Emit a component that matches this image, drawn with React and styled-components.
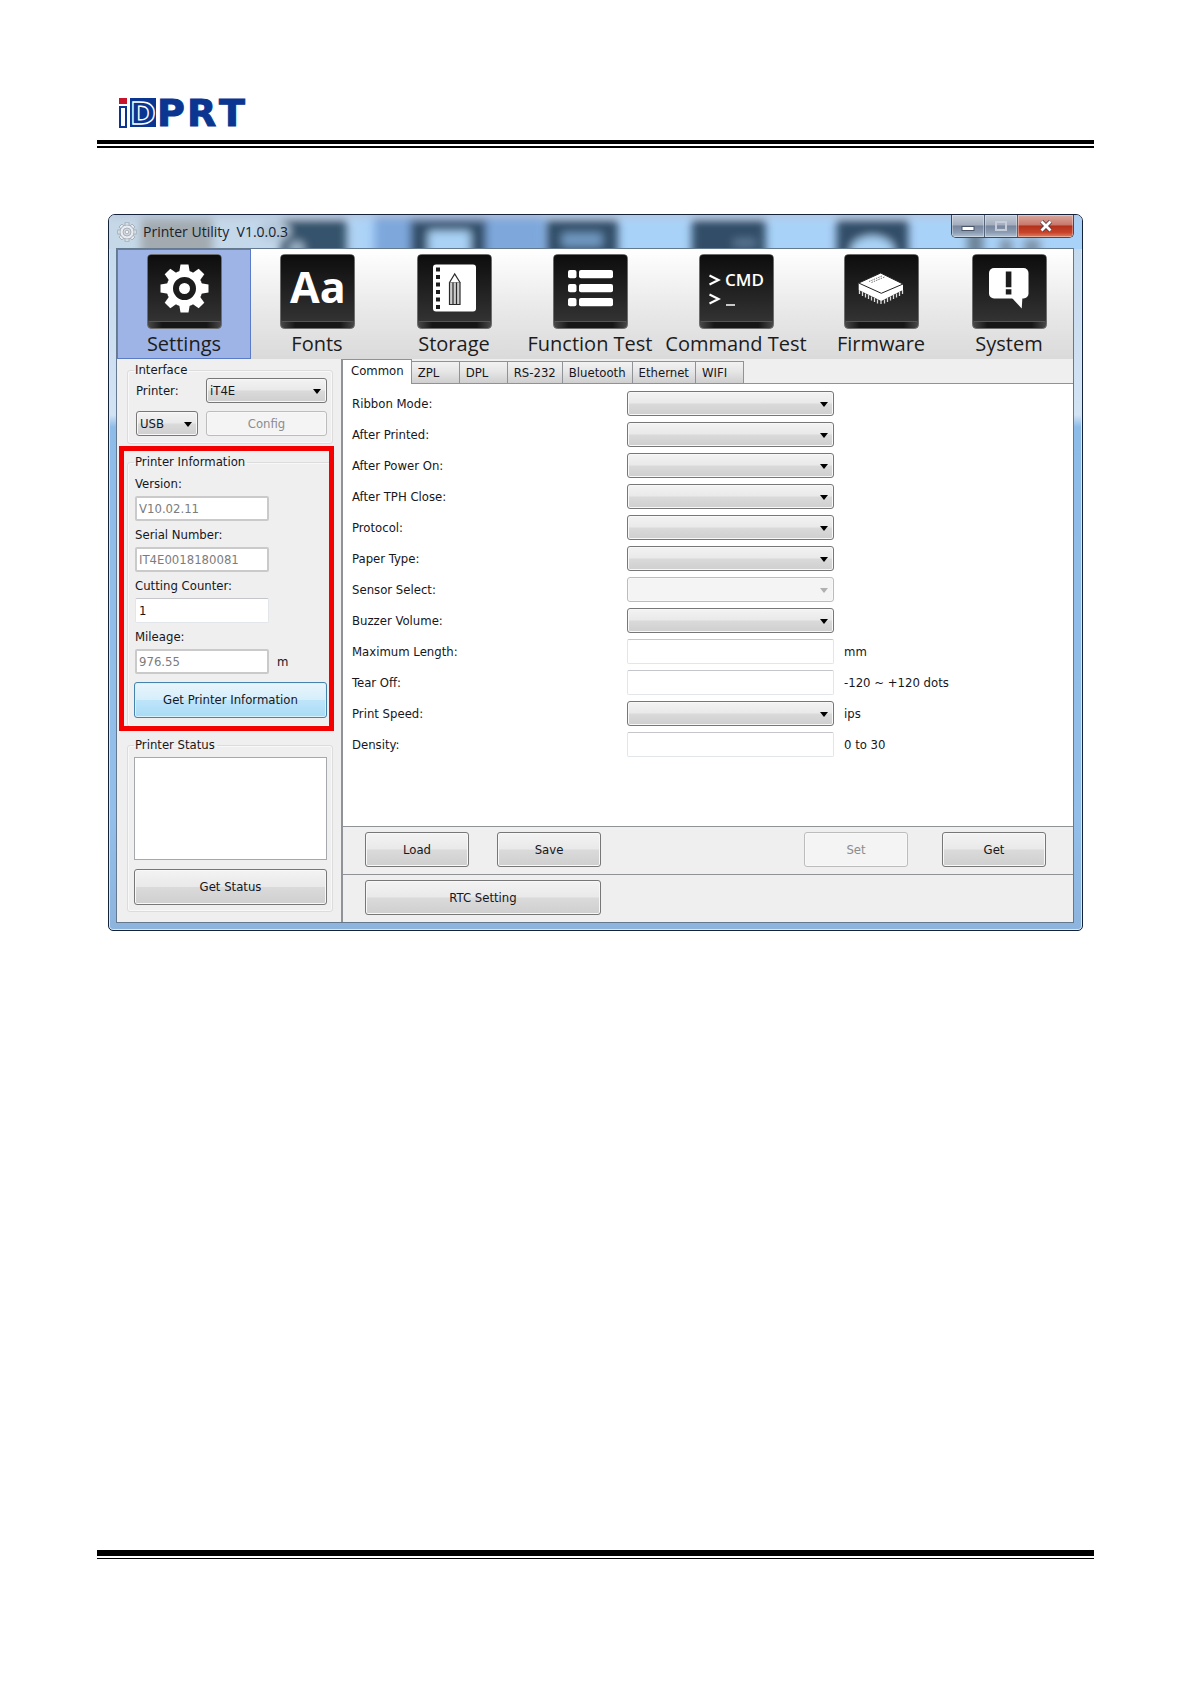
import { useState } from "react";
import styled, { createGlobalStyle, css } from "styled-components";

const GlobalStyle = createGlobalStyle`
  * {
    box-sizing: border-box;
  }

  body {
    margin: 0;
    background: #fff;
    color: #16161c;
    font-family: "DejaVu Sans Condensed", "DejaVu Sans", sans-serif;
    font-stretch: condensed;
    font-size: 13px;
    line-height: 16px;
  }

  button, input, select, textarea {
    font: inherit;
    color: inherit;
    margin: 0;
  }
`;

const Page = styled.div`
  display: flex;
  flex-direction: column;
  min-height: 100vh;
  padding: 88px 97px 125px;
`;

const Header = styled.header`
  padding-left: 20px;
  height: 52px;
  font-stretch: normal;
`;

const DoubleRule = styled.div`
  height: ${(p) => (p.$heavy ? 9 : 8)}px;
  border-top: ${(p) => (p.$heavy ? 6 : 4)}px solid #000;
  border-bottom: ${(p) => (p.$heavy ? 1 : 2)}px solid #000;
`;

const Main = styled.main`
  flex: 1;
  padding: 66px 11px 0;
`;

const Window = styled.section`
  position: relative;
  padding: 0 8px 7px 7px;
  border: 1px solid #14233a;
  border-radius: 7px 7px 5px 5px;
  overflow: hidden;
  background: linear-gradient(
    #c3d8ec 0,
    #d2e3f4 200px,
    #8ebce8 212px,
    #93bfea 600px,
    #8db4dd 100%
  );
  box-shadow: inset 0 0 0 1px #d6e8f8;
`;

const Backdrop = styled.svg`
  position: absolute;
  inset: 0;
  width: 100%;
  height: 34px;
`;

const TitleBar = styled.div`
  position: relative;
  display: flex;
  align-items: center;
  height: 33px;
  gap: 6px;
  padding-left: 1px;
  font-family: "Open Sans", sans-serif;
  font-stretch: normal;
  font-size: 14px;
  white-space: pre;

  h1 {
    flex: 1;
    margin: 0;
    font: inherit;
    color: #1a222c;
  }
`;

const CaptionButtons = styled.div`
  display: flex;
  align-self: flex-start;
  height: 23px;
  border: 1px solid #3d4c60;
  border-top: none;
  border-radius: 0 0 5px 5px;
  overflow: hidden;
`;

const CaptionButton = styled.button`
  display: flex;
  align-items: center;
  justify-content: center;
  width: ${(p) => (p.$close ? 55 : 33)}px;
  padding: 0;
  border: none;
  border-right: ${(p) => (p.$close ? "none" : "1px solid #54647a")};
  background: ${(p) =>
    p.$close
      ? "linear-gradient(#d9a79c 0, #c9776a 45%, #b3301b 50%, #c8452b 80%, #dd8263 100%)"
      : "linear-gradient(#c4ccd8 0, #a3adbd 45%, #77869c 50%, #8d9db3 80%, #b2c2d6 100%)"};
  box-shadow: inset 0 0 0 1px rgba(255, 255, 255, 0.35);
`;

const Client = styled.div`
  position: relative;
  border: 1px solid #64798f;
  background: #efefef;
`;

const Toolbar = styled.nav`
  display: grid;
  grid-template-columns: 134fr 132fr 142fr 130fr 162fr 128fr 128fr;
  height: 110px;
  background: linear-gradient(#fff, #e9e9e9 55%, #dadada);
`;

const Tool = styled.button`
  display: flex;
  flex-direction: column;
  align-items: center;
  gap: 1px;
  padding: 4px 0 0;
  border: 1px solid ${(p) => (p.$active ? "#5b7cc4" : "transparent")};
  background: ${(p) => (p.$active ? "#9fb4e6" : "none")};
  font-family: "Open Sans", sans-serif;
  font-stretch: normal;
  font-size: 20px;
  line-height: 28px;
  white-space: nowrap;
  color: #1c1c1c;

  svg {
    flex: none;
  }
`;

const Body = styled.div`
  display: grid;
  grid-template-columns: 224px 1fr;
`;

const Sidebar = styled.aside`
  display: flex;
  flex-direction: column;
  gap: 10px;
  padding: 3px 8px 8px 10px;
`;

const Group = styled.fieldset`
  min-width: 0;
  margin: 0;
  padding: 0 5px ${(p) => p.$bottom}px 6px;
  border: 1px solid #dcdcdc;
  border-radius: 3px;
  box-shadow: inset 0 0 0 1px #f8f8f8;

  legend {
    padding: 0 2px 0 1px;
  }
`;

const InterfaceGrid = styled.div`
  display: grid;
  grid-template-columns: 62px 1fr;
  gap: 8px;
  align-items: center;
  padding-left: 2px;
`;

const Highlight = styled.div`
  position: relative;

  &::after {
    content: "";
    position: absolute;
    inset: -8px -1px -4px -8px;
    border: 5px solid #f50000;
    pointer-events: none;
  }
`;

const FieldList = styled.div`
  display: flex;
  flex-direction: column;
  gap: 6px;
  padding: 6px 0 8px 1px;
`;

const Field = styled.div`
  display: grid;
  grid-template-columns: 134px 1fr;
  gap: 4px 8px;
  align-items: center;

  label {
    grid-column: 1 / -1;
  }
`;

const TextBox = styled.input`
  width: 100%;
  height: 25px;
  padding: 0 3px;
  border: 1px solid #e2e6ea;
  border-top-color: #c4c6cb;
  border-radius: 2px;
  background: #fff;

  &:disabled {
    border: 2px solid #cacaca;
    padding: 0 2px;
    color: #7c7c7c;
  }
`;

const StatusBox = styled.textarea`
  display: block;
  width: 100%;
  height: 103px;
  margin: 4px 0 9px;
  border: 1px solid #a5a9ae;
  background: #fff;
  resize: none;
`;

const buttonFace = css`
  border: 1px solid #777;
  border-radius: 3px;
  background: linear-gradient(#f3f3f3, #e9e9e9 49%, #dadada 51%, #cfcfcf);
  box-shadow: inset 0 0 0 1px #f8f8f8;

  &:disabled {
    border-color: #bcbcbc;
    background: #f4f4f4;
    color: #8c8c8c;
    opacity: 1;
  }
`;

const Button = styled.button`
  ${buttonFace}
  width: ${(p) => p.$width || "100%"};
  height: ${(p) => p.$height || 35}px;
  padding: 0;

  ${(p) =>
    p.$hot &&
    css`
      border-color: #4583ad;
      background: linear-gradient(#e8f5fc, #d6eefb 49%, #bde5fa 51%, #a9dbf5);
      box-shadow: inset 0 0 0 1px #d9f1fb;
    `}
`;

const SelectWrap = styled.div`
  position: relative;

  &::after {
    content: "";
    position: absolute;
    right: 6px;
    top: 11px;
    border: 4px solid transparent;
    border-top: 5px solid ${(p) => (p.$disabled ? "#b0b0b0" : "#000")};
    border-bottom: none;
    pointer-events: none;
  }
`;

const Select = styled.select`
  ${buttonFace}
  display: block;
  appearance: none;
  width: 100%;
  height: 25px;
  padding: 0 14px 0 3px;
`;

const Content = styled.div`
  display: flex;
  flex-direction: column;
  border-left: 2px solid #8f9296;
`;

const TabList = styled.div`
  display: flex;
  align-items: flex-end;
  height: 25px;
  border-bottom: 1px solid #8f9296;
`;

const Tab = styled.button`
  min-width: 48px;
  height: 22px;
  padding: 0 6px;
  border: 1px solid #8f9296;
  border-left: none;
  border-bottom: none;
  background: linear-gradient(#f2f2f2, #e6e6e6 45%, #cfcfcf);
  text-align: left;

  ${(p) =>
    p.$active &&
    css`
      height: 25px;
      margin-bottom: -1px;
      padding: 0 7px 2px 8px;
      background: #fff;
    `}
`;

const Form = styled.form`
  flex: 1;
  display: flex;
  flex-direction: column;
  gap: 6px;
  padding: 7px 0 69px 9px;
  background: #fff;
`;

const FormRow = styled.div`
  display: grid;
  grid-template-columns: 275fr 207fr 239fr;
  align-items: center;
`;

const Unit = styled.span`
  padding-left: 10px;
`;

const ActionBar = styled.div`
  display: flex;
  align-items: center;
  height: 48px;
  padding: 0 27px 2px 22px;
  border-top: 1px solid #8f9296;
`;

const ActionGroup = styled.div`
  display: flex;
  gap: ${(p) => p.$gap}px;
  margin-left: ${(p) => (p.$end ? "auto" : "0")};
`;

const Logo = () => (
  <svg width="140" height="52" viewBox="0 -8 140 52" role="img" aria-label="iDPRT">
    <rect x="2" y="2" width="8" height="6" fill="#c8142a" />
    <rect x="3" y="11" width="6" height="20" fill="#fff" stroke="#0a3590" strokeWidth="2" />
    <rect x="13" y="2" width="26" height="29" fill="#0a3590" />
    <text
      x="13"
      y="28"
      fontFamily="DejaVu Sans"
      fontWeight="bold"
      fontSize="31"
      fill="#0a3590"
      stroke="#fff"
      strokeWidth="1.4"
    >
      D
    </text>
    <text
      x="40 70 102"
      y="30"
      fontFamily="DejaVu Sans"
      fontWeight="bold"
      fontSize="38"
      fill="#0a3590"
      stroke="#0a3590"
      strokeWidth="1"
    >
      PRT
    </text>
  </svg>
);

const GEAR_ANGLES = [0, 45, 90, 135, 180, 225, 270, 315];

const SmallGear = () => (
  <svg width="20" height="20" viewBox="0 0 20 20" aria-hidden="true">
    <g fill="#e9edf1" stroke="#9aa3ad" strokeWidth="0.8">
      {GEAR_ANGLES.map((a) => (
        <rect key={a} x="8" y="0.8" width="4" height="4" transform={`rotate(${a} 10 10)`} />
      ))}
      <circle cx="10" cy="10" r="7" />
      <circle cx="10" cy="10" r="4" fill="#d3dae1" />
      <circle cx="10" cy="10" r="1.8" fill="#f4f6f8" />
    </g>
  </svg>
);

const Tile = ({ children }) => (
  <svg width="75" height="75" viewBox="0 0 75 75" aria-hidden="true">
    <defs>
      <linearGradient id="tile-face" x1="0" y1="0" x2="0" y2="1">
        <stop offset="0" stopColor="#0d0d0d" />
        <stop offset="1" stopColor="#333" />
      </linearGradient>
      <linearGradient id="tile-lip" x1="0" y1="0" x2="1" y2="0">
        <stop offset="0" stopColor="#4a4a4a" />
        <stop offset="0.2" stopColor="#161616" />
        <stop offset="0.8" stopColor="#161616" />
        <stop offset="1" stopColor="#4a4a4a" />
      </linearGradient>
    </defs>
    <rect x="0.5" y="0.5" width="74" height="74" rx="4" fill="url(#tile-lip)" stroke="#6d6d6d" />
    <rect x="1" y="1" width="73" height="67" rx="3" fill="url(#tile-face)" />
    <path d="M2 67.500H73" stroke="#555" />
    {children}
  </svg>
);

const SettingsIcon = () => (
  <Tile>
    <g fill="#fff">
      {GEAR_ANGLES.map((a) => (
        <path
          key={a}
          d="M33.500 10.500h8l1.500 9h-11z"
          transform={`rotate(${a} 37.500 34.500)`}
        />
      ))}
      <circle cx="37.500" cy="34.500" r="18" />
    </g>
    <circle cx="37.500" cy="34.500" r="8.500" fill="#fff" stroke="#1c1c1c" strokeWidth="6" />
  </Tile>
);

const FontsIcon = () => (
  <Tile>
    <text x="10" y="49" fontFamily="Open Sans" fontWeight="bold" fontSize="43" fill="#fff">
      Aa
    </text>
  </Tile>
);

const StorageIcon = () => (
  <Tile>
    <rect x="16" y="10.500" width="43" height="47" rx="3" fill="#fff" />
    {[13.5, 21, 28.5, 36, 43.5, 51].map((y) => (
      <rect key={y} x="19" y={y} width="4" height="4" fill="#1c1c1c" />
    ))}
    <g fill="none" stroke="#2a2a2a" strokeWidth="1.2">
      <path d="M32.500 28.500h10.500v22h-10.500z" fill="#ccc" />
      <path d="M32.500 28.500l5.200-8.500 5.300 8.500" fill="#fff" />
      <path d="M36 28.500v22M39.500 28.500v22" />
    </g>
  </Tile>
);

const FunctionIcon = () => (
  <Tile>
    <g fill="#fff">
      {[16, 30, 44].map((y) => (
        <g key={y}>
          <rect x="15" y={y} width="8.500" height="8.300" rx="2" />
          <rect x="26" y={y} width="34" height="8.300" rx="2" />
        </g>
      ))}
    </g>
  </Tile>
);

const CommandIcon = () => (
  <Tile>
    <g fill="none" stroke="#fff" strokeWidth="2.200">
      <path d="M10.500 21.500l9 4.500-9 4.500M10.500 40.500l9 4.500-9 4.500" />
      <path d="M27 51h9" strokeWidth="1.500" />
    </g>
    <text x="26" y="32" fontFamily="Open Sans" fontWeight="600" fontSize="17" fill="#fff">
      CMD
    </text>
  </Tile>
);

const FirmwareIcon = () => (
  <Tile>
    <path d="M14.700 29v7l22.600 11L59 36v-6z" fill="#fff" />
    <path d="M36.700 19L59 30 37.300 39.300 14.700 29z" fill="#fff" stroke="#222" strokeWidth="1" />
    <path
      d="M15.500 36v4M18.500 38v4M21.500 39.500v4M24.500 41v4M27.500 42.500v4M30.500 44v4M33.500 45.500v4M37 46v4M40.500 45.500v4M43.500 44v4M46.500 42.500v4M49.500 41v4M52.500 39.500v4M55.500 38v4M58.500 36v4"
      stroke="#ddd"
      strokeWidth="1.300"
    />
    <path d="M25 27.500l13-5.500M27.500 28.500l13-5.500" stroke="#777" strokeDasharray="1.500 1" />
  </Tile>
);

const SystemIcon = () => (
  <Tile>
    <rect x="17" y="14" width="39.500" height="30.500" rx="5" fill="#fff" />
    <path d="M40 44l9.700 10.500L50.500 42z" fill="#fff" />
    <path d="M33.800 17.500h5.600v15.800h-5.600zM33.800 35.300h5.600v5.200h-5.600z" fill="#1c1c1c" />
  </Tile>
);

const TOOLS = [
  { label: "Settings", Icon: SettingsIcon },
  { label: "Fonts", Icon: FontsIcon },
  { label: "Storage", Icon: StorageIcon },
  { label: "Function Test", Icon: FunctionIcon },
  { label: "Command Test", Icon: CommandIcon },
  { label: "Firmware", Icon: FirmwareIcon },
  { label: "System", Icon: SystemIcon },
];

const INFO_FIELDS = [
  { id: "version", label: "Version:", value: "V10.02.11", disabled: true },
  { id: "serial", label: "Serial Number:", value: "IT4E0018180081", disabled: true },
  { id: "cutting", label: "Cutting Counter:", value: "1" },
  { id: "mileage", label: "Mileage:", value: "976.55", unit: "m", disabled: true },
];

const TABS = ["Common", "ZPL", "DPL", "RS-232", "Bluetooth", "Ethernet", "WIFI"];

const SETTINGS = [
  { id: "ribbon", label: "Ribbon Mode:", type: "select" },
  { id: "printed", label: "After Printed:", type: "select" },
  { id: "power", label: "After Power On:", type: "select" },
  { id: "tph", label: "After TPH Close:", type: "select" },
  { id: "protocol", label: "Protocol:", type: "select" },
  { id: "paper", label: "Paper Type:", type: "select" },
  { id: "sensor", label: "Sensor Select:", type: "select", disabled: true },
  { id: "buzzer", label: "Buzzer Volume:", type: "select" },
  { id: "length", label: "Maximum Length:", type: "text", unit: "mm" },
  { id: "tear", label: "Tear Off:", type: "text", unit: "-120 ~ +120 dots" },
  { id: "speed", label: "Print Speed:", type: "select", unit: "ips" },
  { id: "density", label: "Density:", type: "text", unit: "0 to 30" },
];

const DropDown = ({ options = [""], disabled, ...rest }) => (
  <SelectWrap $disabled={disabled}>
    <Select disabled={disabled} {...rest}>
      {options.map((o) => (
        <option key={o}>{o}</option>
      ))}
    </Select>
  </SelectWrap>
);

// Blurred shapes of the window behind, seen through the glass title bar
const Glass = () => (
  <Backdrop viewBox="0 0 975 34" preserveAspectRatio="none" aria-hidden="true">
    <defs>
      <filter id="glass-blur" x="-10%" y="-50%" width="120%" height="200%">
        <feGaussianBlur stdDeviation="4" />
      </filter>
      <linearGradient id="glass-base" x1="0" y1="0" x2="1" y2="0">
        <stop offset="0" stopColor="#c6d8e8" />
        <stop offset="0.2" stopColor="#c3d8ec" />
        <stop offset="0.27" stopColor="#a9d2f8" />
        <stop offset="1" stopColor="#a9d2f8" />
      </linearGradient>
    </defs>
    <rect width="975" height="34" fill="url(#glass-base)" />
    <g filter="url(#glass-blur)">
      <rect x="32" y="4" width="72" height="40" fill="#a3abb1" />
      <rect x="172" y="5" width="66" height="40" fill="#35526c" />
      <ellipse cx="166" cy="16" rx="16" ry="10" fill="#b4c8da" />
      <circle cx="188" cy="34" r="8" fill="#9db4c8" />
      <rect x="266" y="2" width="170" height="40" fill="#7ea8dc" />
      <rect x="302" y="5" width="76" height="40" fill="#304d68" />
      <rect x="320" y="16" width="42" height="30" fill="#a9d2f5" />
      <rect x="438" y="5" width="72" height="40" fill="#304d68" />
      <rect x="454" y="18" width="40" height="14" fill="#6f98c0" />
      <rect x="584" y="5" width="74" height="40" fill="#304d68" />
      <rect x="626" y="24" width="22" height="8" fill="#5b7894" />
      <rect x="729" y="5" width="72" height="40" fill="#304d68" />
      <ellipse cx="765" cy="36" rx="22" ry="15" fill="#a9d2f5" />
      <rect x="860" y="16" width="16" height="30" fill="#6d8499" />
      <rect x="893" y="24" width="12" height="20" fill="#7e93a8" />
      <rect x="917" y="24" width="16" height="20" fill="#7e93a8" />
      <rect x="0" y="-4" width="975" height="6" fill="#b9c2d6" />
    </g>
  </Backdrop>
);

const App = function () {
  const [tool, setTool] = useState("Settings");
  const [tab, setTab] = useState("Common");

  return (
    <Page>
      <GlobalStyle />
      <Header>
        <Logo />
      </Header>
      <DoubleRule />

      <Main>
        <Window>
          <Glass />
          <TitleBar>
            <SmallGear />
            <h1>{"Printer Utility  V1.0.0.3"}</h1>
            <CaptionButtons>
              <CaptionButton aria-label="Minimize">
                <svg width="14" height="12" viewBox="0 0 14 12">
                  <rect x="1" y="6.500" width="12" height="4" fill="#fff" stroke="#4a5668" />
                </svg>
              </CaptionButton>
              <CaptionButton aria-label="Maximize">
                <svg width="14" height="12" viewBox="0 0 14 12">
                  <rect x="2" y="2" width="10" height="8" fill="none" stroke="#c3ccd8" strokeWidth="2" />
                </svg>
              </CaptionButton>
              <CaptionButton $close aria-label="Close">
                <svg width="14" height="12" viewBox="0 0 14 12">
                  <path d="M2.500 1.500l9 9M11.500 1.500l-9 9" stroke="#5b3a44" strokeWidth="4.500" />
                  <path d="M2.500 1.500l9 9M11.500 1.500l-9 9" stroke="#fff" strokeWidth="2.800" />
                </svg>
              </CaptionButton>
            </CaptionButtons>
          </TitleBar>

          <Client>
            <Toolbar>
              {TOOLS.map(({ label, Icon }) => (
                <Tool key={label} $active={tool === label} onClick={() => setTool(label)}>
                  <Icon />
                  {label}
                </Tool>
              ))}
            </Toolbar>

            <Body>
              <Sidebar>
                <Group $bottom={7}>
                  <legend>Interface</legend>
                  <InterfaceGrid>
                    <label htmlFor="printer">Printer:</label>
                    <DropDown id="printer" options={["iT4E"]} />
                    <DropDown aria-label="Port" options={["USB"]} />
                    <Button $height={25} disabled>
                      Config
                    </Button>
                  </InterfaceGrid>
                </Group>

                <Highlight>
                  <Group $bottom={8}>
                    <legend>Printer Information</legend>
                    <FieldList>
                      {INFO_FIELDS.map((f) => (
                        <Field key={f.id}>
                          <label htmlFor={f.id}>{f.label}</label>
                          <TextBox id={f.id} defaultValue={f.value} disabled={f.disabled} />
                          {f.unit && <span>{f.unit}</span>}
                        </Field>
                      ))}
                    </FieldList>
                    <Button $height={36} $hot>
                      Get Printer Information
                    </Button>
                  </Group>
                </Highlight>

                <Group $bottom={6}>
                  <legend>Printer Status</legend>
                  <StatusBox aria-label="Printer Status" readOnly />
                  <Button $height={36}>Get Status</Button>
                </Group>
              </Sidebar>

              <Content>
                <TabList role="tablist">
                  {TABS.map((t) => (
                    <Tab
                      key={t}
                      role="tab"
                      aria-selected={tab === t}
                      $active={tab === t}
                      onClick={() => setTab(t)}
                    >
                      {t}
                    </Tab>
                  ))}
                </TabList>
                <Form>
                  {SETTINGS.map((s) => (
                    <FormRow key={s.id}>
                      <label htmlFor={s.id}>{s.label}</label>
                      {s.type === "select" ? (
                        <DropDown id={s.id} disabled={s.disabled} />
                      ) : (
                        <TextBox id={s.id} />
                      )}
                      {s.unit && <Unit>{s.unit}</Unit>}
                    </FormRow>
                  ))}
                </Form>
                <ActionBar>
                  <ActionGroup $gap={28}>
                    <Button $width="104px">Load</Button>
                    <Button $width="104px">Save</Button>
                  </ActionGroup>
                  <ActionGroup $gap={34} $end>
                    <Button $width="104px" disabled>
                      Set
                    </Button>
                    <Button $width="104px">Get</Button>
                  </ActionGroup>
                </ActionBar>
                <ActionBar>
                  <Button $width="236px">RTC Setting</Button>
                </ActionBar>
              </Content>
            </Body>
          </Client>
        </Window>
      </Main>

      <DoubleRule $heavy />
    </Page>
  );
};

export default App;
